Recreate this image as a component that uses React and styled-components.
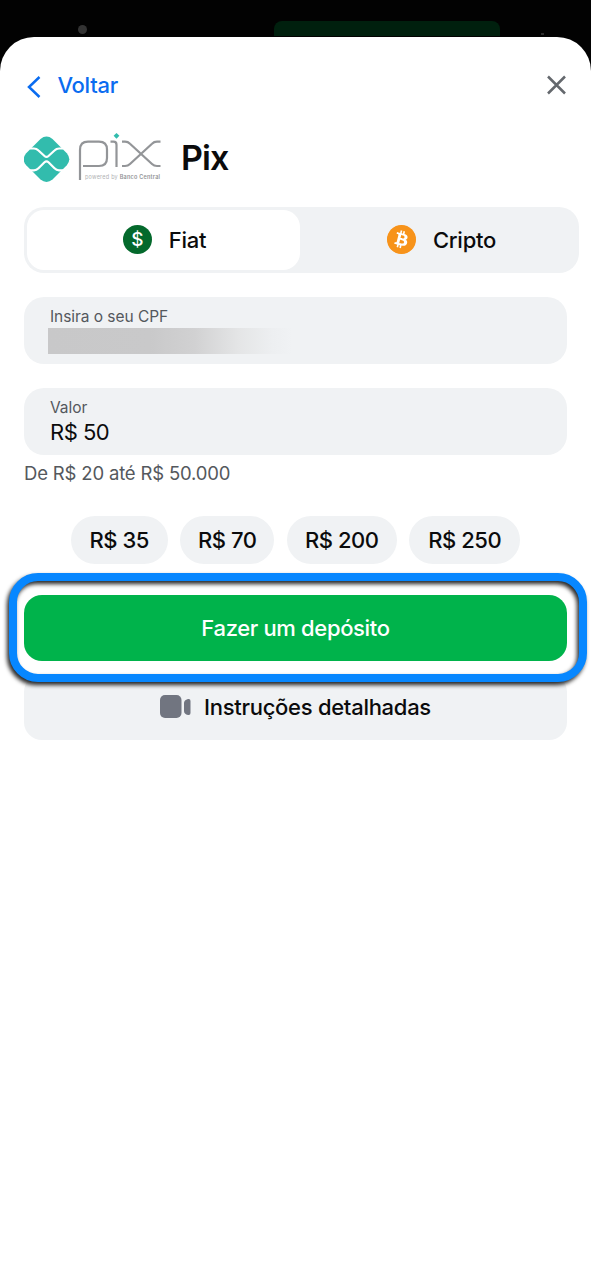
import React, { useState } from 'react'
import styled, { createGlobalStyle } from 'styled-components'
import { FaBitcoin } from 'react-icons/fa'

const GlobalStyle = createGlobalStyle`
  * {
    box-sizing: border-box;
  }
  body {
    margin: 0;
    background: #020202;
    font-family: Inter, 'Liberation Sans', sans-serif;
    color: #0b0b0c;
  }
  button, input {
    font-family: inherit;
    color: inherit;
  }
`

const Page = styled.div`
  display: flex;
  flex-direction: column;
  height: 1280px;
  overflow: hidden;
`

const Backdrop = styled.div`
  display: flex;
  align-items: flex-start;
  flex: none;
  height: 36.5px;
  padding: 21px 0 0 78px;
`

const Dot = styled.span`
  width: 9px;
  height: 9px;
  margin-top: 4px;
  border-radius: 50%;
  background: #333;
`

const GreenBar = styled.span`
  width: 226px;
  height: 15px;
  margin-left: 187px;
  border-radius: 8px 8px 0 0;
  background: #00200e;
`

const Tip = styled.span`
  width: 3px;
  height: 2px;
  margin: 12px 0 0 41px;
  background: #2c2c2c;
`

const Sheet = styled.main`
  flex: 1;
  padding: 36.5px 24px 0;
  border-radius: 34px 34px 0 0;
  background: #fff;
`

const Header = styled.header`
  display: flex;
  justify-content: space-between;
  height: 24px;
`

const Back = styled.button`
  display: flex;
  align-items: center;
  gap: 16.5px;
  padding: 0 0 0 3px;
  border: none;
  background: none;
  color: #0a6cf0;
  font-size: 22px;
  font-weight: 550;
  letter-spacing: -0.3px;
  line-height: 24px;

  svg {
    margin-top: 4px;
  }
`

const Close = styled.button`
  display: flex;
  align-items: center;
  padding: 0;
  border: none;
  background: none;
`

const Title = styled.div`
  display: flex;
  align-items: center;
  gap: 19px;
  height: 50px;
  margin-top: 36px;
`

const H1 = styled.h1`
  margin: -2px 0 0;
  font-size: 34px;
  font-weight: 600;
  letter-spacing: -0.9px;
`

const Tabs = styled.div`
  display: flex;
  width: 555px;
  height: 66px;
  margin-top: 24px;
  padding: 3px;
  border-radius: 20px;
  background: #f0f2f4;
`

const Tab = styled.button`
  display: flex;
  align-items: center;
  justify-content: center;
  gap: 17px;
  width: ${({ $width }) => $width}px;
  padding: 0 0 1px ${({ $indent }) => $indent}px;
  border: none;
  border-radius: 17px;
  background: ${({ $active }) => ($active ? '#fff' : 'transparent')};
  font-size: 22px;
  font-weight: 550;
  letter-spacing: -0.25px;
`

const Coin = styled.span`
  display: flex;
  align-items: center;
  justify-content: center;
  width: 29px;
  height: 29px;
  border-radius: 50%;
  background: ${({ $bitcoin }) => ($bitcoin ? 'radial-gradient(#fff 60%, #f7931a 62%)' : '#04692c')};
  color: #fff;
  font-size: 19px;
  font-weight: 500;
`

const Field = styled.label`
  display: block;
  height: 67px;
  margin-top: 24px;
  padding: 10px 24px 0 26px;
  border-radius: 20px;
  background: #f0f2f4;
`

const Label = styled.span`
  display: block;
  color: #54585d;
  font-size: 15.5px;
  letter-spacing: -0.05px;
  line-height: 19px;
`

const Input = styled.input`
  display: block;
  width: 100%;
  height: 30px;
  padding: 0;
  border: none;
  outline: none;
  background: none;
  font-size: 22px;
  letter-spacing: -0.5px;
`

const Hidden = styled.span`
  display: block;
  width: 244px;
  height: 26px;
  margin: 2px 0 0 -2px;
  background: linear-gradient(90deg, #c8c8c9 0%, #c9c9ca 42%, #d1d1d2 60%, #e4e5e6 78%, #edeff1 92%, #f0f2f4 100%);
`

const Hint = styled.p`
  margin: 6px 0 0;
  color: #54585d;
  font-size: 18.5px;
  letter-spacing: -0.17px;
  line-height: 24px;
`

const Chips = styled.div`
  display: flex;
  justify-content: center;
  gap: 12.5px;
  margin-top: 31px;
`

const Chip = styled.button`
  width: ${({ $width }) => $width}px;
  height: 48px;
  padding: 0;
  border: none;
  border-radius: 24px;
  background: #f0f2f4;
  font-size: 22px;
  font-weight: 550;
  letter-spacing: -0.45px;
  white-space: nowrap;
`

const Action = styled.div`
  position: relative;
  margin-top: 31px;
`

const Submit = styled.button`
  display: block;
  width: 100%;
  height: 66px;
  border: none;
  border-radius: 18px;
  background: #00b34b;
  color: #fff;
  font-size: 22px;
  font-weight: 550;
  letter-spacing: -0.35px;
`

const Highlight = styled.span`
  position: absolute;
  z-index: 1;
  inset: -22px -20px -21px -15px;
  border: 8px solid #0787ff;
  border-radius: 29px;
  filter: drop-shadow(-2px 3px 2px rgba(0, 0, 0, 0.85));
  pointer-events: none;
`

const Instructions = styled.button`
  display: flex;
  align-items: center;
  justify-content: center;
  gap: 13px;
  width: 100%;
  height: 66px;
  margin-top: 13px;
  border: none;
  border-radius: 18px;
  background: #f0f2f4;
  font-size: 22px;
  font-weight: 550;
  letter-spacing: -0.28px;
`

const PixLogo = () => (
  <svg width="138" height="50" viewBox="0 0 138 50" fill="none">
    <path
      d="M16.5 6q6-4.8 12 0L42.8 20.3q5 6 0 12L28.5 46.5q-6 4.8-12 0L2.2 32.3q-5-6 0-12z"
      fill="#32bcad"
    />
    <path
      d="M6 15.5h4q2.5 0 4.5 2l6 5.5q2 1.8 4 0l6-5.5q2-2 4.5-2h4M6 37.3h4q2.5 0 4.5-2l6-6q2-1.8 4 0l6 6q2 2 4.5 2h4"
      stroke="#fff"
      strokeWidth="2.2"
    />
    <g stroke="#939598" strokeWidth="2.2">
      <path d="M56 47V17Q56 8.700 64 8.700h11Q83 8.700 83 16.700V25Q83 33 75 33H59" />
      <path d="M86.5 8.700h3q3 0 3 3V34" />
      <path d="M98 8.700h3q3 0 5 2l22 20.300q2 2 5 2h3.500M98 33h3q3 0 5-2l22-20.300q2-2 5-2h3.500" />
    </g>
    <path d="M92.5 0l2.900 2.800-2.900 2.900-2.900-2.900z" fill="#32bcad" />
    <text
      x="61"
      y="46"
      fontSize="5.5"
      fill="#b0b2b4"
      textLength="75"
      fontFamily="Inter, sans-serif"
    >
      powered by <tspan fontWeight="600" fill="#929497">Banco Central</tspan>
    </text>
  </svg>
)

const amounts = [
  { value: 35, width: 97 },
  { value: 70, width: 94 },
  { value: 200, width: 110 },
  { value: 250, width: 111 },
]

const App = () => {
  const [tab, setTab] = useState('fiat')
  const [value, setValue] = useState('R$ 50')

  return (
    <Page>
      <GlobalStyle />
      <Backdrop>
        <Dot />
        <GreenBar />
        <Tip />
      </Backdrop>
      <Sheet>
        <Header>
          <Back>
            <svg width="14" height="22" viewBox="0 0 14 22" fill="none">
              <path d="M12.5 1L2 11l10.5 10" stroke="currentColor" strokeWidth="2.5" />
            </svg>
            Voltar
          </Back>
          <Close aria-label="Fechar">
            <svg width="21" height="20" viewBox="0 0 21 20" fill="none">
              <path d="M2 1.5l17 17M19 1.5l-17 17" stroke="#64686d" strokeWidth="2.5" />
            </svg>
          </Close>
        </Header>
        <Title>
          <PixLogo />
          <H1>Pix</H1>
        </Title>
        <Tabs>
          <Tab $width={273} $indent={2} $active={tab === 'fiat'} onClick={() => setTab('fiat')}>
            <Coin>$</Coin>
            Fiat
          </Tab>
          <Tab $width={276} $indent={7} $active={tab === 'cripto'} onClick={() => setTab('cripto')}>
            <Coin $bitcoin>
              <FaBitcoin size={29} color="#f7931a" />
            </Coin>
            Cripto
          </Tab>
        </Tabs>
        <Field as="div">
          <Label>Insira o seu CPF</Label>
          <Hidden />
        </Field>
        <Field>
          <Label>Valor</Label>
          <Input value={value} onChange={(e) => setValue(e.target.value)} />
        </Field>
        <Hint>De R$ 20 até R$ 50.000</Hint>
        <Chips>
          {amounts.map((item) => (
            <Chip key={item.value} $width={item.width} onClick={() => setValue(`R$ ${item.value}`)}>
              R$ {item.value}
            </Chip>
          ))}
        </Chips>
        <Action>
          <Submit>Fazer um depósito</Submit>
          <Highlight />
        </Action>
        <Instructions>
          <svg width="31" height="24" viewBox="0 0 31 24" fill="#717580">
            <rect width="21.5" height="23" rx="5" />
            <path d="M30.5 6v12q0 2.5-2.500 2-4-1-4-4V8q0-3 4-4Q30.5 3.500 30.5 6z" />
          </svg>
          Instruções detalhadas
        </Instructions>
      </Sheet>
    </Page>
  )
}

export default App
